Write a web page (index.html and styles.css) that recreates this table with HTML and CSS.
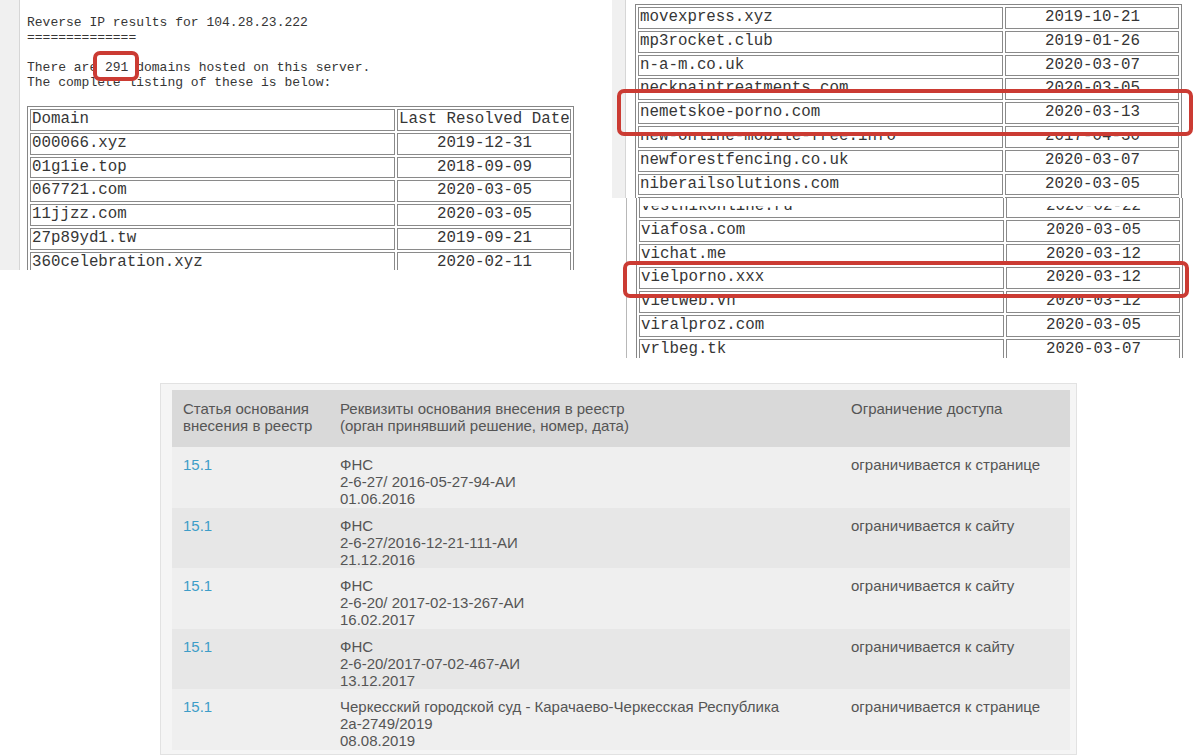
FILE: index.html
```html
<!DOCTYPE html>
<html lang="ru">
<head>
<meta charset="utf-8">
<title>Reverse IP / Реестр</title>
<link rel="stylesheet" href="styles.css">
</head>
<body>
<div class="canvas">

  <section class="shot shot-ip">
    <div class="strip strip-a"></div>
    <div class="ip-body">
<pre class="ip-text">Reverse IP results for 104.28.23.222
==============

There are 291 domains hosted on this server.
The complete listing of these is below:</pre>
      <table class="iptable">
        <tr><td class="c1">Domain</td><td class="c2 left">Last Resolved Date</td></tr>
        <tr><td class="c1">000066.xyz</td><td class="c2">2019-12-31</td></tr>
        <tr><td class="c1">01g1ie.top</td><td class="c2">2018-09-09</td></tr>
        <tr><td class="c1">067721.com</td><td class="c2">2020-03-05</td></tr>
        <tr><td class="c1">11jjzz.com</td><td class="c2">2020-03-05</td></tr>
        <tr><td class="c1">27p89yd1.tw</td><td class="c2">2019-09-21</td></tr>
        <tr><td class="c1">360celebration.xyz</td><td class="c2">2020-02-11</td></tr>
      </table>
    </div>
  </section>

  <section class="shot shot-n">
    <div class="strip strip-b"></div>
    <table class="iptable iptable-n">
      <tr><td class="c1">movexpress.xyz</td><td class="c2">2019-10-21</td></tr>
      <tr><td class="c1">mp3rocket.club</td><td class="c2">2019-01-26</td></tr>
      <tr><td class="c1">n-a-m.co.uk</td><td class="c2">2020-03-07</td></tr>
      <tr><td class="c1"><span class="cut cut-low">neckpaintreatments.com</span></td><td class="c2"><span class="cut cut-low">2020-03-05</span></td></tr>
      <tr><td class="c1">nemetskoe-porno.com</td><td class="c2">2020-03-13</td></tr>
      <tr><td class="c1"><span class="cut cut-high">new-online-mobile-free.info</span></td><td class="c2"><span class="cut cut-high">2017-04-30</span></td></tr>
      <tr><td class="c1">newforestfencing.co.uk</td><td class="c2">2020-03-07</td></tr>
      <tr><td class="c1">niberailsolutions.com</td><td class="c2">2020-03-05</td></tr>
      <tr><td class="c1">&nbsp;</td><td class="c2">&nbsp;</td></tr>
    </table>
  </section>

  <section class="shot shot-v">
    <table class="iptable iptable-v">
      <tr><td class="c1"><span class="cut cut-top">vestnikonline.ru</span></td><td class="c2"><span class="cut cut-top">2020-02-22</span></td></tr>
      <tr><td class="c1">viafosa.com</td><td class="c2">2020-03-05</td></tr>
      <tr><td class="c1"><span class="cut cut-tail">vichat.me</span></td><td class="c2"><span class="cut cut-tail">2020-03-12</span></td></tr>
      <tr><td class="c1">vielporno.xxx</td><td class="c2">2020-03-12</td></tr>
      <tr><td class="c1"><span class="cut cut-head">vietweb.vn</span></td><td class="c2"><span class="cut cut-head">2020-03-12</span></td></tr>
      <tr><td class="c1">viralproz.com</td><td class="c2">2020-03-05</td></tr>
      <tr><td class="c1">vrlbeg.tk</td><td class="c2">2020-03-07</td></tr>
    </table>
  </section>

  <section class="shot shot-reg">
    <table class="regtable">
      <thead>
        <tr>
          <th class="r1">Статья основания<br>внесения в реестр</th>
          <th class="r2">Реквизиты основания внесения в реестр<br>(орган принявший решение, номер, дата)</th>
          <th class="r3">Ограничение доступа</th>
        </tr>
      </thead>
      <tbody>
        <tr>
          <td><a class="art">15.1</a></td>
          <td>ФНС<br>2-6-27/ 2016-05-27-94-АИ<br>01.06.2016</td>
          <td>ограничивается к странице</td>
        </tr>
        <tr>
          <td><a class="art">15.1</a></td>
          <td>ФНС<br>2-6-27/2016-12-21-111-АИ<br>21.12.2016</td>
          <td>ограничивается к сайту</td>
        </tr>
        <tr>
          <td><a class="art">15.1</a></td>
          <td>ФНС<br>2-6-20/ 2017-02-13-267-АИ<br>16.02.2017</td>
          <td>ограничивается к сайту</td>
        </tr>
        <tr>
          <td><a class="art">15.1</a></td>
          <td>ФНС<br>2-6-20/2017-07-02-467-АИ<br>13.12.2017</td>
          <td>ограничивается к сайту</td>
        </tr>
        <tr>
          <td><a class="art">15.1</a></td>
          <td>Черкесский городской суд - Карачаево-Черкесская Республика<br>2а-2749/2019<br>08.08.2019</td>
          <td>ограничивается к странице</td>
        </tr>
      </tbody>
    </table>
  </section>

  <div class="mark mark-291"></div>
  <div class="mark mark-nem"></div>
  <div class="mark mark-viel"></div>
</div>
</body>
</html>
```

FILE: styles.css
```css
* { box-sizing: border-box; }

html, body {
  margin: 0;
  padding: 0;
  background: #ffffff;
}

.canvas {
  position: relative;
  width: 1200px;
  height: 755px;
  overflow: hidden;
  background: #ffffff;
}

.shot {
  position: absolute;
  overflow: hidden;
  background: #ffffff;
}

/* ---------- Reverse IP shot ---------- */
.shot-ip {
  left: 0;
  top: 0;
  width: 583px;
  height: 270px;
  display: flex;
}

.strip {
  flex: none;
  background: #f0f0f0;
  border-right: 1px solid #d6d6d6;
}
.strip-a { width: 20px; }
.strip-b { width: 14px; height: 100%; }

.ip-body {
  padding: 15px 0 0 7px;
}

.ip-text {
  margin: 0 0 16px 0;
  font-family: "Liberation Mono", "DejaVu Sans Mono", monospace;
  font-size: 13px;
  line-height: 15px;
  color: #363636;
}

.iptable {
  flex: none;
  width: 547px;
  table-layout: fixed;
  border-collapse: separate;
  border-spacing: 2px;
  border: 1px solid #868686;
  font-family: "Liberation Mono", "DejaVu Sans Mono", monospace;
  font-size: 15.8px;
  color: #363636;
}

.iptable td {
  border: 1px solid #8a8a8a;
  padding: 0 0 0 1px;
  line-height: 19.8px;
  height: 21.8px;
  white-space: nowrap;
  overflow: hidden;
  vertical-align: top;
}

.iptable td.c1 { width: 365px; }
.iptable td.c2 { text-align: center; }
.iptable td.left { text-align: left; }

/* ---------- second shot (n...) ---------- */
.shot-n {
  left: 612px;
  top: 0;
  width: 588px;
  height: 198px;
  display: flex;
  align-items: flex-start;
}

.iptable-n {
  margin: 4px 0 0 9px;
}

/* ---------- third shot (v...) ---------- */
.shot-v {
  left: 626px;
  top: 198px;
  width: 574px;
  height: 160px;
  border-left: 1px solid #b8b8b8;
}

.iptable-v {
  margin: -5px 0 0 9px;
}

/* clipped text pieces (spliced screenshot) */
.cut { display: block; }
.cut-low  { clip-path: inset(0 0 7px 0); }
.cut-high { clip-path: inset(9px 0 0 0); }
.cut-top  { clip-path: inset(9px 0 0 0); }
.cut-tail { clip-path: inset(0 0 4px 0); }
.cut-head { clip-path: inset(3px 0 0 0); }

/* ---------- registry shot ---------- */
.shot-reg {
  left: 160px;
  top: 383px;
  width: 917px;
  height: 372px;
  background: #f5f5f5;
  border: 1px solid #e2e2e2;
  padding: 6px 0 0 11px;
}

.regtable {
  width: 898px;
  border-collapse: collapse;
  table-layout: fixed;
  font-family: "Liberation Sans", Arial, sans-serif;
  font-size: 15px;
  line-height: 17px;
  color: #555555;
}

.regtable th {
  background: #d9d9d9;
  font-weight: normal;
  text-align: left;
  vertical-align: top;
  padding: 10px 10px 13px 11px;
}

.regtable th.r1 { width: 158px; }
.regtable th.r2 { width: 511px; padding-left: 10px; }
.regtable th.r3 { padding-left: 10px; }

.regtable td {
  vertical-align: top;
  padding: 9px 10px 0 10px;
  height: 60.5px;
}
.regtable td:first-child { padding-left: 11px; }

.regtable tbody tr:nth-child(odd) td { background: #efefef; }
.regtable tbody tr:nth-child(even) td { background: #e7e7e7; }

.art {
  color: #3d9dc8;
  text-decoration: none;
}

/* ---------- red highlight marks ---------- */
.mark {
  position: absolute;
  border: 4px solid #cb3b33;
  border-radius: 7px;
}

.mark-291 {
  left: 93px;
  top: 51px;
  width: 46px;
  height: 30px;
}

.mark-nem {
  left: 617px;
  top: 89px;
  width: 576px;
  height: 47px;
}

.mark-viel {
  left: 623px;
  top: 261px;
  width: 566px;
  height: 37px;
}
```
